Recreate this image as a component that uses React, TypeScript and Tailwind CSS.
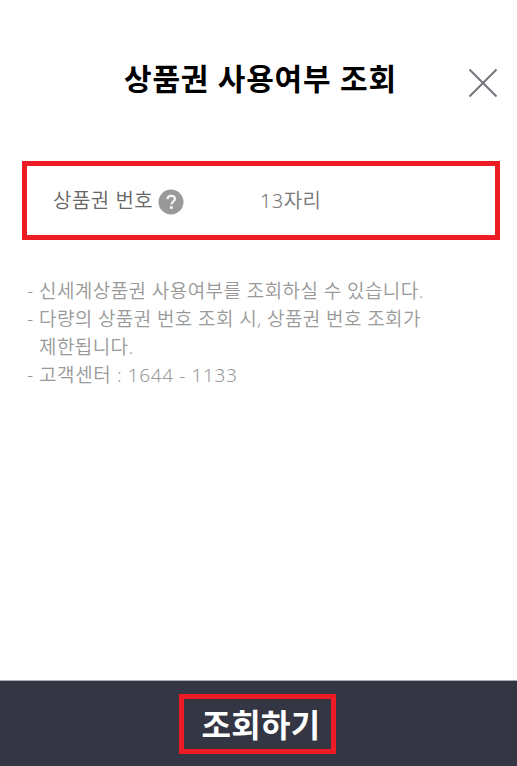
import React from 'react';

const notices = [
  { lines: ['신세계상품권 사용여부를 조회하실 수 있습니다.'], tracking: 'tracking-[0.43px]' },
  { lines: ['다량의 상품권 번호 조회 시, 상품권 번호 조회가', '제한됩니다.'], tracking: 'tracking-[0.4px]' },
  { lines: ['고객센터 : 1644 - 1133'], tracking: 'tracking-[0.62px]' },
];

const CloseIcon: React.FC = () => (
  <svg width="30" height="30" viewBox="0 0 30 30" fill="none" stroke="#74757c" strokeWidth="2">
    <path d="M1.5 1.5 28.5 28.5M28.5 1.5 1.5 28.5" />
  </svg>
);

const HelpIcon: React.FC = () => (
  <svg width="26" height="26" viewBox="0 0 26 26" fill="none">
    <circle cx="13" cy="13" r="12.5" fill="#999" />
    <path d="M9.4 10.2c.2-2.2 1.7-3.3 3.8-3.3 2.2 0 3.7 1.2 3.7 3 0 2.6-3.4 2.6-3.4 5.6" stroke="#f4f4f4" strokeWidth="2.2" />
    <rect x="12" y="17.2" width="2.8" height="2.7" fill="#f4f4f4" />
  </svg>
);

export default function App() {
  return (
    <div className="flex h-[766px] w-[517px] flex-col bg-white font-['Noto_Sans','Noto_Sans_CJK_KR',sans-serif]">
      <header className="flex h-[161px] items-start pl-[124px] pr-[19px] pt-[57px]">
        <h1 className="w-[344px] whitespace-nowrap text-[30px] leading-[44px] font-bold tracking-[0.8px] text-black">상품권 사용여부 조회</h1>
        <button type="button" aria-label="닫기" className="mt-[11px]">
          <CloseIcon />
        </button>
      </header>

      <main className="flex-1">
        <div className="ml-[22px] flex h-[79px] w-[478px] items-center border-[5px] border-[#ed1c24] pl-[26px]">
          <label className="flex w-[206px] items-center gap-[5px] whitespace-nowrap text-[20px] leading-[30px] font-[350] tracking-[0.5px] text-[#666]">
            상품권 번호
            <span className="mt-[3px]">
              <HelpIcon />
            </span>
          </label>
          <span className="pl-px text-[20px] leading-[30px] font-[350] tracking-[0.4px] text-[#777]">13자리</span>
        </div>

        <ul className="mt-[37px] pl-[27px] text-[19px] leading-[28px] font-[350] text-[#999]">
          {notices.map(({ lines, tracking }) => (
            <li key={lines[0]} className="flex">
              <span className="-mt-px w-[12px]">-</span>
              <div className={tracking}>
                {lines.map((line) => (
                  <p key={line} className="whitespace-nowrap">{line}</p>
                ))}
              </div>
            </li>
          ))}
        </ul>
      </main>

      <footer className="flex h-[86px] justify-center border-t border-[#a9b0b0] bg-[#343743] pt-[13px]">
        <button
          type="button"
          className="-ml-[2px] flex h-[60px] w-[157px] items-center justify-center border-[5px] border-[#ed1c24] pt-px pl-[7px] text-[32px] leading-[44px] font-bold tracking-[0.3px] whitespace-nowrap text-white"
        >
          조회하기
        </button>
      </footer>
    </div>
  );
}
